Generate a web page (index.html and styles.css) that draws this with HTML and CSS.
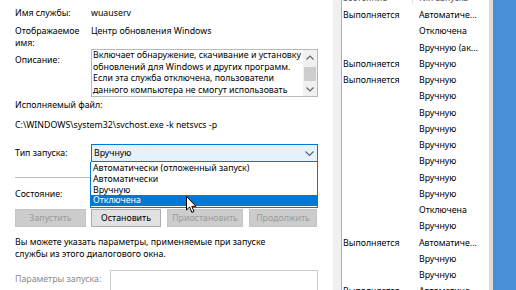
FILE: index.html
```html
<!DOCTYPE html>
<html lang="ru">
<head>
    <meta charset="UTF-8">
    <meta name="viewport" content="width=device-width, initial-scale=1.0">
    <title>Свойства: Центр обновления Windows</title>
    <link rel="stylesheet" href="styles.css">
</head>
<body>
<div class="screen">

    <!-- service properties dialog, General tab -->
    <div class="dlg">
        <div class="row r-name">
            <span class="lbl">Имя службы:</span>
            <span>wuauserv</span>
        </div>
        <div class="row r-disp">
            <span class="lbl">Отображаемое<br>имя:</span>
            <span>Центр обновления Windows</span>
        </div>
        <div class="row r-desc">
            <span class="lbl">Описание:</span>
            <div class="desc">
                <div class="desc-text">Включает обнаружение, скачивание и установку<br>обновлений для Windows и других программ.<br>Если эта служба отключена, пользователи<br>данного компьютера не смогут использовать</div>
                <div class="vscroll">
                    <svg class="arr" width="8" height="5" viewBox="0 0 8 5"><polyline points="0.5,4.5 4,1 7.5,4.5" /></svg>
                    <span class="thumb"></span>
                    <svg class="arr" width="8" height="5" viewBox="0 0 8 5"><polyline points="0.5,0.5 4,4 7.5,0.5" /></svg>
                </div>
            </div>
        </div>
        <div class="exe-lbl">Исполняемый файл:</div>
        <div class="exe">C:\WINDOWS\system32\svchost.exe -k netsvcs -p</div>
        <div class="row r-start">
            <span class="lbl">Тип запуска:</span>
            <div class="combo">
                <div class="combo-box">
                    <span>Вручную</span>
                    <svg class="chev" width="9" height="5" viewBox="0 0 9 5"><polyline points="0.5,0.5 4.5,4.5 8.5,0.5" /></svg>
                </div>
                <ul class="combo-list">
                    <li>Автоматически (отложенный запуск)</li>
                    <li>Автоматически</li>
                    <li>Вручную</li>
                    <li class="sel">Отключена</li>
                </ul>
                <svg class="cursor" width="12" height="18" viewBox="0 0 12 18">
                    <path d="M0.5 0.5 L0.5 14 L3.6 11 L5.9 16.4 L8 15.5 L5.8 10.3 L10 10.3 Z" />
                </svg>
            </div>
        </div>
        <div class="sep"></div>
        <div class="row r-state">
            <span class="lbl">Состояние:</span>
            <span>Выполняется</span>
        </div>
        <div class="btns">
            <button class="btn b1" disabled>Запустить</button>
            <button class="btn b2">Остановить</button>
            <button class="btn b3" disabled>Приостановить</button>
            <button class="btn b4" disabled>Продолжить</button>
        </div>
        <p class="hint">Вы можете указать параметры, применяемые при запуске<br>службы из этого диалогового окна.</p>
        <div class="row r-params">
            <span class="lbl dis">Параметры запуска:</span>
            <div class="params"></div>
        </div>
    </div>

    <div class="frame"></div>

    <!-- services list behind the dialog -->
    <div class="list">
        <div class="hdr"><span class="c1">Состояние</span><span class="c2">Тип запуска</span></div>
        <div class="li-row"><span class="c1">Выполняется</span><span class="c2">Автоматиче...</span></div>
        <div class="li-row"><span class="c1"></span><span class="c2">Отключена</span></div>
        <div class="li-row"><span class="c1"></span><span class="c2">Вручную (ак...</span></div>
        <div class="li-row"><span class="c1">Выполняется</span><span class="c2">Вручную</span></div>
        <div class="li-row"><span class="c1">Выполняется</span><span class="c2">Вручную</span></div>
        <div class="li-row"><span class="c1"></span><span class="c2">Вручную</span></div>
        <div class="li-row"><span class="c1"></span><span class="c2">Вручную</span></div>
        <div class="li-row"><span class="c1"></span><span class="c2">Вручную</span></div>
        <div class="li-row"><span class="c1"></span><span class="c2">Вручную</span></div>
        <div class="li-row"><span class="c1"></span><span class="c2">Вручную</span></div>
        <div class="li-row"><span class="c1"></span><span class="c2">Вручную</span></div>
        <div class="li-row"><span class="c1"></span><span class="c2">Вручную</span></div>
        <div class="li-row"><span class="c1"></span><span class="c2">Отключена</span></div>
        <div class="li-row"><span class="c1"></span><span class="c2">Вручную</span></div>
        <div class="li-row"><span class="c1">Выполняется</span><span class="c2">Автоматиче...</span></div>
        <div class="li-row"><span class="c1"></span><span class="c2">Вручную</span></div>
        <div class="li-row"><span class="c1"></span><span class="c2">Вручную</span></div>
        <div class="li-row"><span class="c1">Выполняется</span><span class="c2">Автоматиче...</span></div>
    </div>

    <div class="edge"></div>
    <div class="desk"></div>
</div>
</body>
</html>
```

FILE: styles.css
```css
* {
  margin: 0;
  padding: 0;
  box-sizing: border-box;
}

body {
  width: 516px;
  height: 290px;
  overflow: hidden;
  background: #fff;
  color: #000;
  font-family: "Noto Sans", sans-serif;
  font-size: 8.8px;
}

.screen {
  display: flex;
  height: 290px;
}

/* dialog */
.dlg {
  width: 333px;
  flex: none;
  padding: 7px 15px 0 15px;
  background: #fff;
  white-space: nowrap;
}
.row {
  display: flex;
}
.lbl {
  width: 76px;
  flex: none;
}
.dis {
  color: #8c8c8c;
}
.r-name {
  line-height: 12px;
}
.r-disp {
  margin-top: 7px;
  line-height: 11.5px;
}
.r-desc .lbl {
  padding-top: 5px;
  line-height: 12px;
}
.desc {
  flex: 1;
  height: 48px;
  border: 1px solid #b9b9b9;
  display: flex;
  overflow: hidden;
}
.desc-text {
  flex: 1;
  padding-left: 1px;
  line-height: 11.6px;
  overflow: hidden;
}
.vscroll {
  width: 14px;
  flex: none;
  background: #f0f0f0;
  display: flex;
  flex-direction: column;
  align-items: center;
  justify-content: space-between;
  padding: 5px 0 4px 0;
}
.vscroll .thumb {
  width: 12px;
  height: 14px;
  background: #cdcdcd;
}
.arr polyline, .chev polyline {
  fill: none;
  stroke: #606060;
  stroke-width: 1.1;
}

.exe-lbl {
  margin-top: 2px;
  line-height: 12px;
}
.exe {
  margin-top: 8px;
  line-height: 12px;
}

.r-start {
  margin-top: 13px;
  align-items: center;
}
.combo {
  flex: 1;
  position: relative;
}
.combo-box {
  height: 18px;
  background: #e5f1fb;
  border: 1px solid #0078d7;
  display: flex;
  align-items: center;
  justify-content: space-between;
  padding: 0 3px 0 2px;
}
.combo-list {
  list-style: none;
  position: absolute;
  top: 100%;
  left: -1px;
  right: 0;
  height: 46px;
  padding-top: 1px;
  background: #fff;
  border: 1px solid #0078d7;
  border-top: none;
  z-index: 2;
}
.combo-list li {
  line-height: 10.8px;
  padding-left: 2px;
}
.combo-list .sel {
  background: #0078d7;
  color: #fff;
}
.cursor {
  position: absolute;
  left: 95px;
  top: 52px;
  z-index: 3;
}
.cursor path {
  fill: #fff;
  stroke: #000;
  stroke-width: 1;
  stroke-linejoin: round;
}

.sep {
  margin-top: 15px;
  height: 1px;
  background: #bcbcbc;
}
.r-state {
  margin-top: 10px;
  line-height: 12px;
}

.btns {
  margin-top: 9px;
  display: flex;
}
.btn {
  height: 18px;
  font: inherit;
  background: #e1e1e1;
  border: 1px solid #adadad;
  color: #000;
}
.btn:disabled {
  background: #cccccc;
  border-color: #c4c4c4;
  color: #9a9a9a;
}
.b1 { width: 71px; }
.b2 { width: 70px; margin-left: 5px; }
.b3 { width: 76px; margin-left: 6px; }
.b4 { width: 68px; margin-left: 6px; }

.hint {
  margin-top: 10px;
  line-height: 11.8px;
}

.r-params {
  margin-top: 9.4px;
}
.r-params .lbl {
  width: 95px;
  padding-top: 3px;
  line-height: 12px;
}
.params {
  flex: 1;
  height: 22px;
  border: 1px solid #cccccc;
  background: #fff;
}

/* window frame between dialog and list */
.frame {
  width: 9px;
  flex: none;
  background: #f0f0f0;
  border-right: 1px solid #86b8e8;
}

/* services list */
.list {
  width: 147px;
  flex: none;
  background: #fff;
  white-space: nowrap;
}
.hdr {
  height: 7px;
  overflow: hidden;
  display: flex;
  align-items: flex-end;
  padding-bottom: 3px;
  color: #555;
}
.hdr span {
  line-height: 12px;
}
.hdr .c1 {
  width: 71px;
  border-right: 1px solid #e5e5e5;
}
.hdr .c2 {
  padding-left: 5px;
}
.li-row {
  display: flex;
  height: 16.25px;
  line-height: 16.25px;
}
.li-row .c1 {
  width: 77px;
  flex: none;
  padding-left: 1px;
}

.edge {
  width: 4px;
  flex: none;
  background: #dcdcdc;
}
.desk {
  flex: 1;
  background: #4a90d9;
}
```
